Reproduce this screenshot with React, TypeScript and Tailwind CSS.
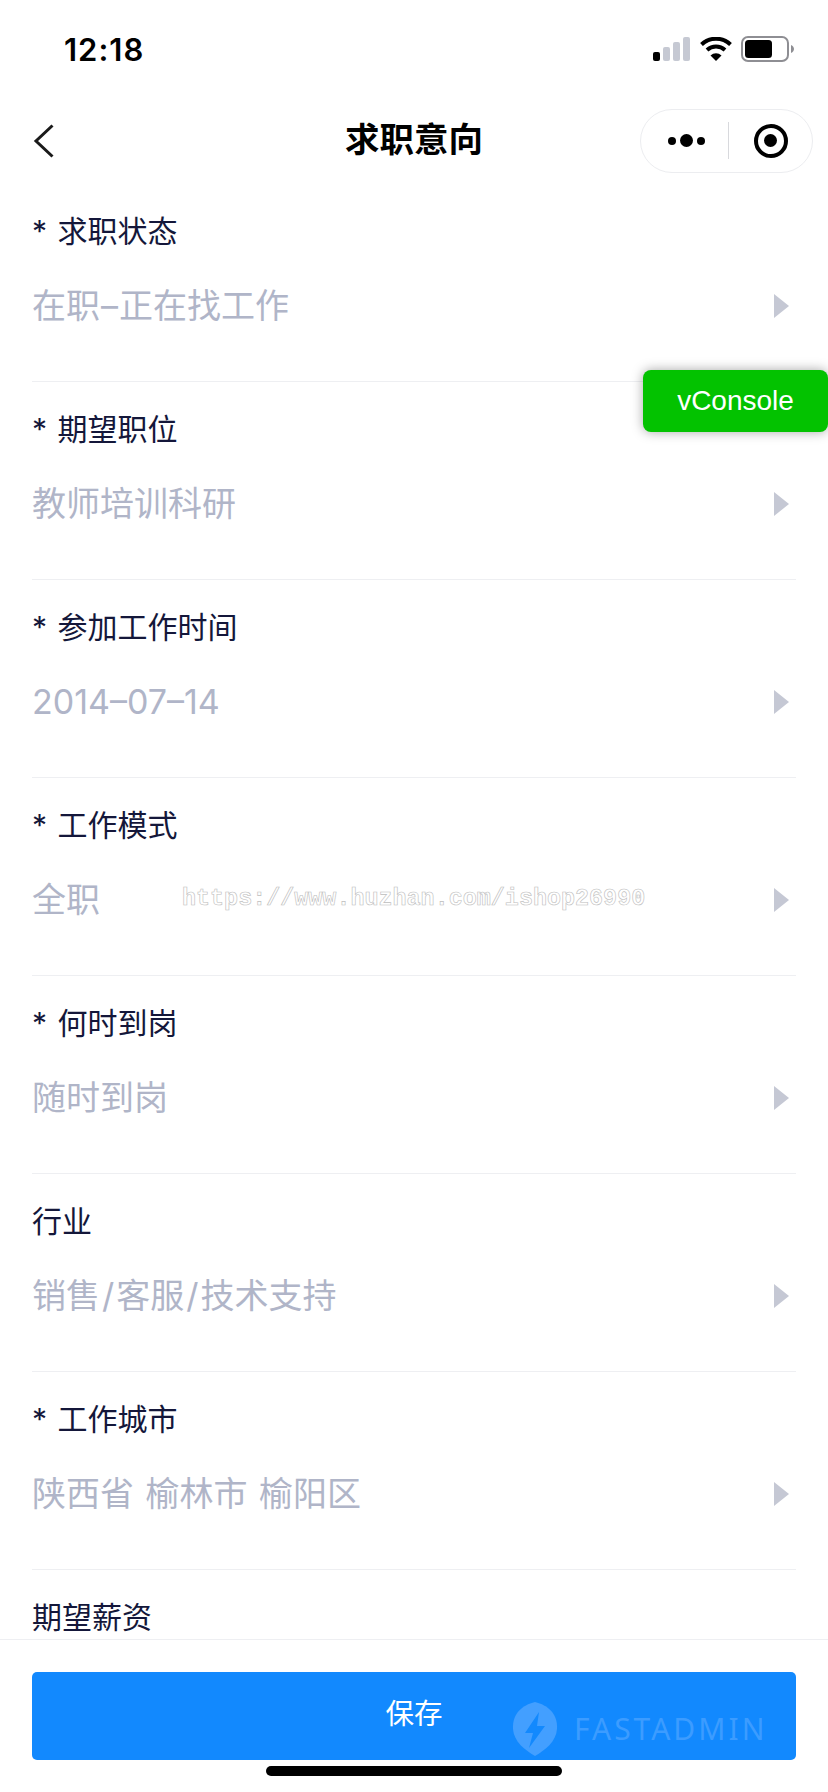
import type { ReactNode } from "react";

// the slashes and the first dash sit a little wider in the original font
const Sep = ({ children, wide }: { children: string; wide?: boolean }) => (
  <span className={wide ? "mx-[2px]" : "mx-[1px]"}>{children}</span>
);

const fields: { label: string; value: ReactNode }[] = [
  { label: "* 求职状态", value: <>在职<Sep>–</Sep>正在找工作</> },
  { label: "* 期望职位", value: "教师培训科研" },
  { label: "* 参加工作时间", value: "2014–07–14" },
  { label: "* 工作模式", value: "全职" },
  { label: "* 何时到岗", value: "随时到岗" },
  { label: "行业", value: <>销售<Sep wide>/</Sep>客服<Sep wide>/</Sep>技术支持</> },
  { label: "* 工作城市", value: "陕西省 榆林市 榆阳区" },
  { label: "期望薪资", value: "" },
];

const StatusIcons = () => (
  <div className="flex items-center">
    <svg width="37" height="24" viewBox="0 0 37 24" className="mr-[10px]">
      <rect x="0" y="15" width="7" height="9" rx="2" fill="#000" />
      <rect x="10" y="10" width="7" height="14" rx="2" fill="#c6c9d3" />
      <rect x="20" y="5" width="7" height="19" rx="2" fill="#c6c9d3" />
      <rect x="30" y="0" width="7" height="24" rx="2" fill="#c6c9d3" />
    </svg>
    <svg width="32" height="24" viewBox="0 0 32 24" className="mr-[9px]">
      <path d="M1.500 7.500 A21 21 0 0 1 30.500 7.500" fill="none" stroke="#000" strokeWidth="4" />
      <path d="M7 13 A13.500 13.500 0 0 1 25 13" fill="none" stroke="#000" strokeWidth="4" />
      <path d="M10.500 18.500 L16 24 L21.500 18.500 A8 8 0 0 0 10.500 18.500 Z" fill="#000" />
    </svg>
    <svg width="53" height="26" viewBox="0 0 53 26">
      <rect x="1" y="1" width="46" height="24" rx="6" fill="#fff" stroke="#8e8e93" strokeWidth="2" />
      <rect x="4" y="4" width="27" height="18" rx="3.5" fill="#000" />
      <path d="M50 9 C52 10 53 11.500 53 13 C53 14.500 52 16 50 17 Z" fill="#8e8e93" />
    </svg>
  </div>
);

const Row = ({ label, value }: { label: string; value: ReactNode }) => (
  <div className="mx-8 h-[198px] shrink-0 border-b border-[#eeeff2]">
    <div className="flex h-[94px] items-center whitespace-pre text-[30px] leading-none text-[#14173a] [word-spacing:2px]">
      {label}
    </div>
    <div className="mt-[2px] flex h-[52px] items-center justify-between pr-[7px] text-[34px] leading-none text-[#b0b5c8] [word-spacing:2px]">
      <span>{value}</span>
      {value && <span className="h-0 w-0 border-y-[12px] border-l-[15px] border-y-transparent border-l-[#c5c8d4]" />}
    </div>
  </div>
);

const App = () => {
  return (
    <div className="relative flex h-[1792px] w-[828px] flex-col overflow-hidden bg-white font-['Inter','Noto_Sans_CJK_SC',sans-serif]">
      <div className="flex h-[98px] shrink-0 items-center justify-between pl-[64px] pr-[34px]">
        <span className="text-[31px] font-semibold leading-none tracking-[1px] text-black">12:18</span>
        <StatusIcons />
      </div>

      <div className="grid h-[85px] shrink-0 grid-cols-[1fr_auto_1fr] items-center">
        <svg width="22" height="34" viewBox="0 0 22 34" className="ml-[33px]" fill="none" stroke="#1a1a1a" strokeWidth="3">
          <path d="M19.500 1.500 L3 17 L19.500 32.500" />
        </svg>
        <h1 className="text-[34.500px] font-bold leading-none text-black">求职意向</h1>
        <div className="mr-[15px] flex h-[64px] w-[173px] items-center justify-self-end rounded-full border border-[#ecedf0]">
          <div className="flex flex-1 items-center justify-center gap-[4px] pl-[4px]">
            <span className="h-[8px] w-[8px] rounded-full bg-black" />
            <span className="h-[13px] w-[13px] rounded-full bg-black" />
            <span className="h-[8px] w-[8px] rounded-full bg-black" />
          </div>
          <span className="h-[37px] w-px bg-[#d8d9dd]" />
          <div className="flex flex-1 items-center justify-center">
            <span className="flex h-[34px] w-[34px] items-center justify-center rounded-full border-[4px] border-black">
              <span className="h-[13px] w-[13px] rounded-full bg-black" />
            </span>
          </div>
        </div>
      </div>

      <div className="flex-1 overflow-hidden pt-[1px]">
        {fields.map((f) => (
          <Row key={f.label} label={f.label} value={f.value} />
        ))}
      </div>

      <div className="h-[153px] shrink-0 border-t border-[#eeeff2] px-8 pt-[32px]">
        <button className="relative flex h-[88px] w-full items-center justify-center rounded-[5px] bg-[#1289fe] pb-[4px] text-[28.500px] text-white">
          保存
          <svg width="46" height="54" viewBox="0 0 46 54" className="absolute left-[480px] top-[30px]">
            <path d="M23 0 C36 3 46 12 45 27 C44 40 33 48 23 54 C13 48 2 40 1 27 C0 12 10 3 23 0 Z" fill="#439fff" />
            <path d="M27 10 L13 31 L21 31 L17 46 L33 24 L25 24 Z" fill="#1289fe" />
          </svg>
          <span className="absolute left-[542px] top-[41px] font-['Noto_Sans',sans-serif] text-[30px] leading-[32px] tracking-[3px] text-[#3c9cff]">
            FASTADMIN
          </span>
        </button>
      </div>

      <div className="absolute right-0 top-[370px] flex h-[62px] w-[185px] items-center justify-center rounded-[8px] bg-[#03c200] font-['Liberation_Sans',sans-serif] text-[28px] text-white shadow-[0_0_12px_rgba(0,0,0,0.35)]">
        vConsole
      </div>

      <span className="absolute left-[182px] top-[885px] font-['Liberation_Mono',monospace] text-[23.400px] font-bold leading-[28px] text-transparent [-webkit-text-stroke:0.6px_#bdbdbd]">
        https://www.huzhan.com/ishop26990
      </span>

      <div className="absolute bottom-[16px] left-[266px] h-[10px] w-[296px] rounded-full bg-black" />
    </div>
  );
};

export default App;
